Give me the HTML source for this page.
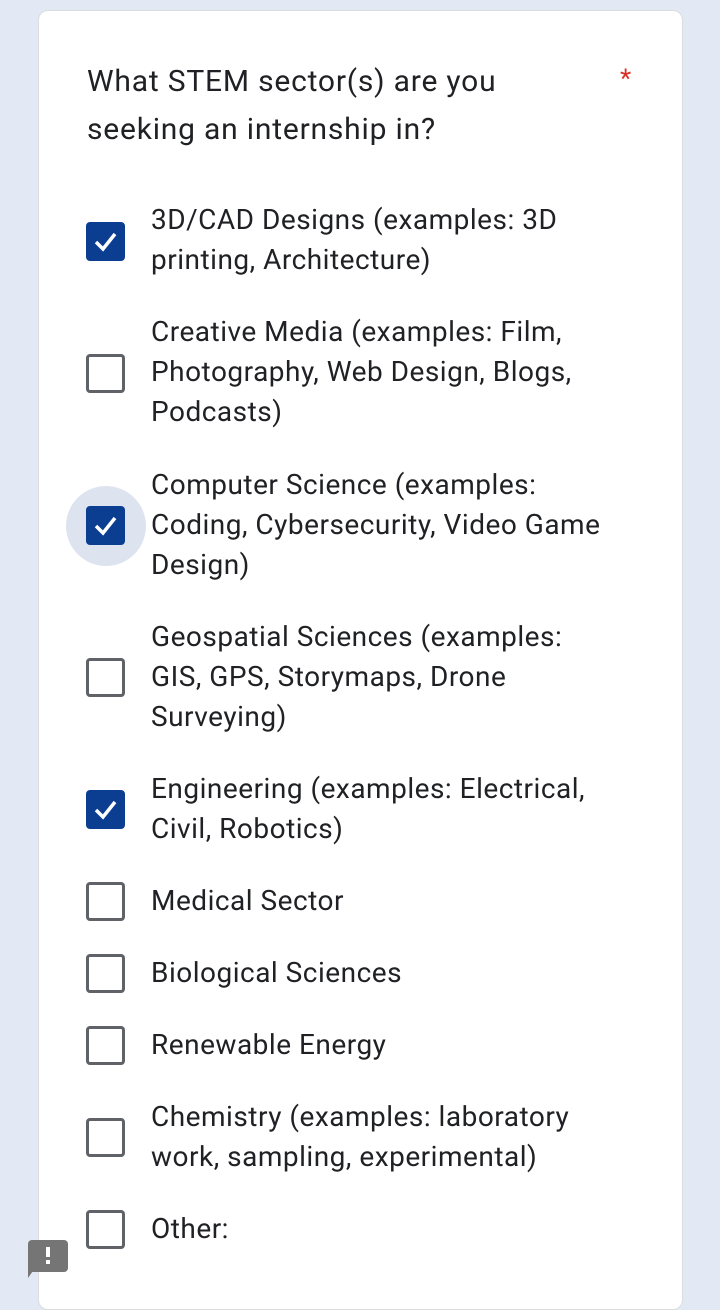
<!DOCTYPE html>
<html><head><meta charset="utf-8"><style>
html,body{margin:0;padding:0}
body{width:720px;height:1278px;background:#e3e9f4;position:relative;overflow:hidden;font-family:"Roboto","Liberation Sans",sans-serif;color:#202124}
.card{position:absolute;left:38px;top:10px;width:645px;height:1300px;background:#fff;border-radius:10px;border:1px solid #dadce0;box-sizing:border-box}
.q{position:absolute;left:87px;top:58px;font-size:30px;line-height:48px;letter-spacing:0.8px}
.ast{position:absolute;left:620px;top:64px;color:#d93025;font-size:26px}
.t{position:absolute;left:151px;font-size:28px;line-height:40px;letter-spacing:0.5px;white-space:nowrap}
.cb{position:absolute;left:86px;width:39px;height:39px;box-sizing:border-box;border:3px solid #5f6368;border-radius:4px}
.cb.on{background:#0b3d91;border-color:#0b3d91}
.cb.on svg{position:absolute;left:-3px;top:-3px}
.halo{position:absolute;left:66px;top:486px;width:80px;height:80px;border-radius:50%;background:#dde4f0}
.fb{position:absolute;left:28px;top:1240px;width:40px;height:32px;background:#757575;border-radius:4px}
.fb:before{content:"";position:absolute;left:18px;top:7px;width:4px;height:10px;background:#fff}
.fb:after{content:"";position:absolute;left:18px;top:20px;width:4px;height:4px;background:#fff}
.tail{position:absolute;left:28px;top:1268px;width:0;height:0;border-left:7px solid #757575;border-bottom:10px solid transparent}
</style></head><body>
<div class="card"></div>
<div class="q">What STEM sector(s) are you<br>seeking an internship in?</div>
<div class="ast">*</div>
<div class="halo"></div>

<div class="cb on" style="top:222px"><svg width="39" height="39" viewBox="0 0 39 39"><path d="M10 20 L17 27 L29 12" fill="none" stroke="#fff" stroke-width="3.5"/></svg></div>
<div class="t" style="top:200px">3D/CAD Designs (examples: 3D<br>printing, Architecture)</div>

<div class="cb" style="top:354px"></div>
<div class="t" style="top:312px">Creative Media (examples: Film,<br>Photography, Web Design, Blogs,<br>Podcasts)</div>

<div class="cb on" style="top:506px"><svg width="39" height="39" viewBox="0 0 39 39"><path d="M10 20 L17 27 L29 12" fill="none" stroke="#fff" stroke-width="3.5"/></svg></div>
<div class="t" style="top:465px">Computer Science (examples:<br>Coding, Cybersecurity, Video Game<br>Design)</div>

<div class="cb" style="top:658px"></div>
<div class="t" style="top:617px">Geospatial Sciences (examples:<br>GIS, GPS, Storymaps, Drone<br>Surveying)</div>

<div class="cb on" style="top:790px"><svg width="39" height="39" viewBox="0 0 39 39"><path d="M10 20 L17 27 L29 12" fill="none" stroke="#fff" stroke-width="3.5"/></svg></div>
<div class="t" style="top:769px">Engineering (examples: Electrical,<br>Civil, Robotics)</div>

<div class="cb" style="top:882px"></div>
<div class="t" style="top:881px">Medical Sector</div>

<div class="cb" style="top:954px"></div>
<div class="t" style="top:953px">Biological Sciences</div>

<div class="cb" style="top:1026px"></div>
<div class="t" style="top:1025px">Renewable Energy</div>

<div class="cb" style="top:1118px"></div>
<div class="t" style="top:1097px">Chemistry (examples: laboratory<br>work, sampling, experimental)</div>

<div class="cb" style="top:1210px"></div>
<div class="t" style="top:1209px">Other:</div>

<div class="fb"></div><div class="tail"></div>
</body></html>
